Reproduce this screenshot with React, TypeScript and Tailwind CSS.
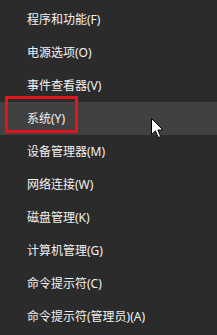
const ITEMS = [
  '程序和功能(F)',
  '电源选项(O)',
  '事件查看器(V)',
  '系统(Y)',
  '设备管理器(M)',
  '网络连接(W)',
  '磁盘管理(K)',
  '计算机管理(G)',
  '命令提示符(C)',
  '命令提示符(管理员)(A)',
];

export default function App() {
  return (
    <div className="relative h-[335px] w-[217px] overflow-hidden bg-[#2b2b2b] pt-[3px] font-['Noto_Sans','Noto_Sans_CJK_SC',sans-serif] text-[12px] text-[#f2f2f2]">
      {ITEMS.map((label, i) => (
        <div
          key={label}
          className={
            i === 3
              ? 'flex h-[33px] items-center bg-[#414141] pl-[27px]'
              : 'flex h-[33px] items-center pl-[27px]'
          }
        >
          <span className="leading-none">{label}</span>
        </div>
      ))}
      <div className="absolute left-[5px] top-[96px] h-[37px] w-[73px] border-[3px] border-[#e3141c]" />
      <svg
        className="absolute left-[151px] top-[118px]"
        width="13"
        height="21"
        viewBox="0 0 13 21"
      >
        <path
          d="M0.5 0.5 L0.5 16.5 L4.4 12.8 L7.2 19.5 L9.6 18.5 L6.9 12 L12 12 Z"
          fill="#ffffff"
          stroke="#000000"
          strokeWidth="1"
          strokeLinejoin="miter"
        />
      </svg>
    </div>
  );
}
